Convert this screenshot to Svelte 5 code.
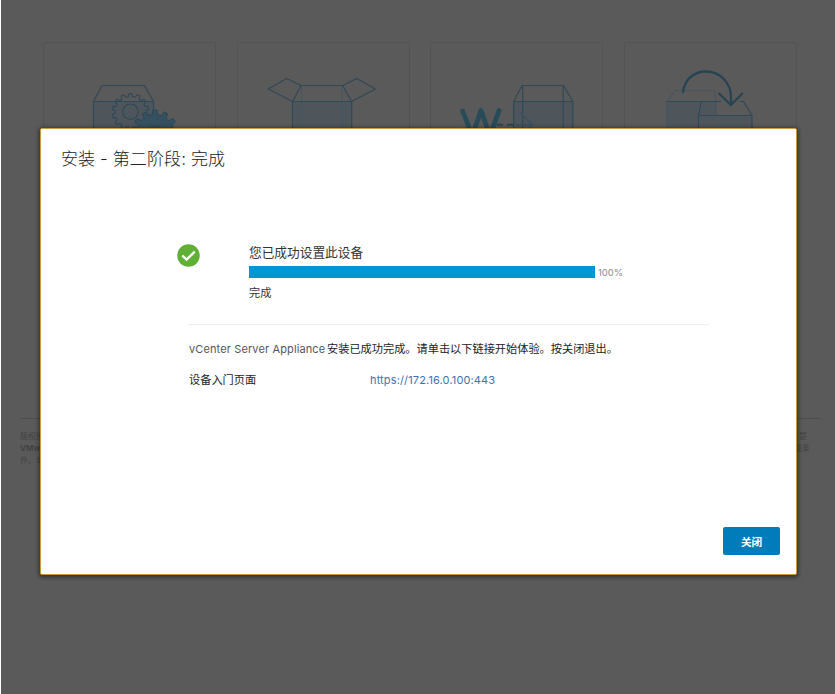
<script lang="ts">
  const percent = 100
  const applianceUrl = 'https://172.16.0.100:443'

  function gear (cx: number, cy: number, outer: number, root: number, teeth: number) {
    const points: string[] = []
    const step = (Math.PI * 2) / teeth
    const profile = [[-0.3, root], [-0.18, outer], [0.18, outer], [0.3, root]]

    for (let i = 0; i < teeth; i++) {
      for (const [offset, radius] of profile) {
        const angle = (i + offset) * step - Math.PI / 2
        points.push(`${(cx + radius * Math.cos(angle)).toFixed(2)},${(cy + radius * Math.sin(angle)).toFixed(2)}`)
      }
    }
    return points.join(' ')
  }
</script>

<div class="page">
  <main class="cards">
    <div class="card">
      <svg viewBox="0 0 173 200">
        <path class="fill" d="M50.5 59.5H110.5V120H50.5z" />
        <path class="line" d="M50.5 120V59.5L59 43.5H101.5L110.5 59.5V120M50.5 59.5H110.5" />
        <polygon class="line" points={gear(87.5, 70, 18.5, 15.5, 14)} />
        <circle class="line" cx="87.5" cy="69.7" r="7.7" />
        <polygon class="cog" points={gear(112, 91.5, 23.5, 19, 13)} />
        <circle class="line" cx="111.5" cy="91" r="7" />
      </svg>
    </div>
    <div class="card">
      <svg viewBox="0 0 173 200">
        <path class="fill" d="M55.7 59.5H114.7V120H55.7z" />
        <path class="line faint" d="M64.5 43.5V120M105 43.5V120" />
        <path class="line" d="M55.5 120V59.5L64 43.5L49.7 36.5L31.3 47L55.5 59.5H114.7L138.3 47L120 36.5L105.5 43.5L114.7 59.5V120M64 43.5H105.5" />
      </svg>
    </div>
    <div class="card">
      <svg viewBox="0 0 173 200">
        <path class="fill" d="M84 59.5H142.8V120H84z" />
        <path class="line" d="M83.7 120V59.5L92 43.5H133.5L142.8 59.5V120M83.7 59.5H142.8M92.7 43.5V120M133.2 43.5V120" />
        <path class="letter" d="M32.6 69L42.3 94L51 68.5L60 94L69 68.5" />
        <path class="dash" d="M67 82.8H84" />
        <path class="arrow-light" d="M86.3 82.8H102.3M89.5 70L102.8 82.8L89.5 95.5" />
      </svg>
    </div>
    <div class="card">
      <svg viewBox="0 0 173 200">
        <path class="fill" d="M43 59.5H92V120H43z" />
        <path class="line faint" d="M43 59.5L51 48.5H90.5L92 59.5V120M43 120V59.5" />
        <path class="line" d="M43 59.5H97" />
        <path class="fill" d="M74.5 73.5H128V120H74.5z" />
        <path class="line" d="M74.5 120V73.5L77.3 59.5M116 59.5H119.5L128 73.5V120M74.5 73.5H128" />
        <path class="arrow" d="M59 50C61 36 71 29.5 82 29.5C96 29.5 107 41 107 55V62M95.3 51.7L106.8 63L118.2 51.7" />
      </svg>
    </div>
  </main>
  <footer>
    <div><span>版权所有</span><span>是</span></div>
    <div><b>VMware</b><span>或条</span></div>
    <div><span>件。本</span></div>
  </footer>
</div>

<div class="modal" role="dialog" aria-labelledby="title">
  <h3 id="title">安装 - 第二阶段: 完成</h3>
  <div class="body">
    <div class="status">
      <svg class="check" viewBox="0 0 24 24">
        <circle cx="12" cy="12" r="11.7" />
        <path d="M5.5 12L10 16.3L18.5 8" />
      </svg>
      <div class="progress">
        <div class="message">您已成功设置此设备</div>
        <div class="meter">
          <div class="track"><div class="bar" style:width="{percent}%"></div></div>
          <span class="percent">{percent}%</span>
        </div>
        <div class="state">完成</div>
      </div>
    </div>
    <div class="details">
      <p><span class="product">vCenter Server Appliance</span> <span>安装已成功完成。请单击以下链接开始体验。按关闭退出。</span></p>
      <div class="row">
        <span class="label">设备入门页面</span>
        <a href={applianceUrl}>{applianceUrl}</a>
      </div>
    </div>
  </div>
  <div class="actions">
    <button>关闭</button>
  </div>
</div>

<style>
  :global(body) {
    background: #fff;
    overflow: hidden;
    font-family: Inter, 'Noto Sans CJK SC', sans-serif;
  }

  .page {
    box-sizing: border-box;
    height: 694px;
    margin-left: 1px;
    padding: 42px 0 0 42px;
    background: #5a5a5a;
  }

  .cards {
    display: grid;
    grid-template-columns: repeat(4, 173px);
    gap: 20.7px;
    height: 376px;
  }

  .card {
    box-sizing: border-box;
    height: 330px;
    border: 1px solid #525354;
    border-radius: 2px;
  }

  .card svg {
    display: block;
    width: 173px;
    height: 200px;
    margin: -1px;
    fill: none;
  }

  .card .fill {
    fill: #4f565b;
  }

  .line {
    stroke: #304957;
    stroke-width: 1.2;
    stroke-linejoin: round;
  }

  .faint {
    stroke: #465661;
  }

  .card .cog {
    fill: #35505f;
    stroke: #2c4857;
  }

  .letter {
    stroke: #284b5a;
    stroke-width: 4.8;
    stroke-linecap: round;
    stroke-linejoin: round;
  }

  .dash {
    stroke: #294655;
    stroke-width: 2;
    stroke-dasharray: 6 4;
  }

  .arrow-light {
    stroke: #3e535f;
    stroke-width: 2;
    stroke-linecap: round;
  }

  .arrow {
    stroke: #284453;
    stroke-width: 2.3;
    stroke-linecap: round;
  }

  footer {
    box-sizing: border-box;
    width: 801px;
    margin-left: -23px;
    padding: 11px 11px 0 0;
    border-top: 1px solid #4e4e4e;
    font-size: 8px;
    line-height: 12px;
    color: #434343;
  }

  footer div {
    display: flex;
    justify-content: space-between;
  }

  footer div:first-child {
    padding-right: 3px;
  }

  .modal {
    position: absolute;
    top: 128px;
    left: 40px;
    box-sizing: border-box;
    width: 757px;
    height: 447px;
    display: flex;
    flex-direction: column;
    padding: 17px 16px 19px 20px;
    border: 1px solid #c9993f;
    border-radius: 2px;
    background: #fff;
    box-shadow: 0 1px 4px 1px rgba(0, 0, 0, 0.5);
  }

  h3 {
    margin: 0;
    font-size: 17px;
    font-weight: 300;
    line-height: 26px;
    letter-spacing: 0.1px;
    color: #222;
    white-space: nowrap;
  }

  .body {
    flex: 1;
    padding: 71px 0 0 116px;
  }

  .status {
    display: flex;
    gap: 49px;
    height: 81px;
  }

  .check {
    width: 23px;
    height: 23px;
    margin-top: 1px;
  }

  .check circle {
    fill: #61b036;
  }

  .check path {
    fill: none;
    stroke: #fff;
    stroke-width: 2.5;
  }

  .message {
    margin-top: 1px;
    font-size: 12.7px;
    line-height: 18px;
    color: #333;
  }

  .meter {
    display: flex;
    align-items: center;
    gap: 3px;
    margin-top: 4px;
    height: 12px;
  }

  .track {
    width: 346px;
    height: 12px;
  }

  .bar {
    height: 100%;
    background: #0095d3;
  }

  .percent {
    font-size: 9.5px;
    color: #8c8c8c;
  }

  .state {
    margin-top: 7px;
    font-size: 11.2px;
    line-height: 17px;
    color: #333;
  }

  .details {
    width: 521px;
    margin-left: 11px;
    border-top: 1px solid #eee;
    font-size: 11.2px;
    line-height: 20px;
    color: #222;
  }

  p {
    display: flex;
    margin: 14px 0 11px 1px;
    white-space: nowrap;
  }

  .product {
    width: 138px;
    font-size: 11px;
    letter-spacing: 0.12px;
    color: #565656;
  }

  .row {
    display: flex;
    margin-left: 1px;
  }

  .label {
    width: 181px;
  }

  a {
    font-size: 11px;
    letter-spacing: 0.14px;
    color: #3d74ad;
    text-decoration: none;
  }

  .actions {
    display: flex;
    justify-content: flex-end;
  }

  button {
    width: 57px;
    height: 28px;
    padding: 0;
    border: 0;
    border-radius: 2px;
    background: #007cbb;
    color: #fff;
    font-family: inherit;
    font-size: 10.6px;
    font-weight: 700;
  }
</style>
